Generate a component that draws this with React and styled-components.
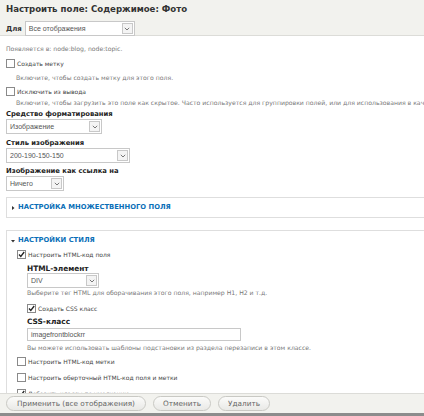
import styled, { createGlobalStyle } from 'styled-components';

const GlobalStyle = createGlobalStyle`
  html, body {
    margin: 0;
    padding: 0;
    background: #fff;
  }
  body {
    font-family: 'DejaVu Sans', Verdana, sans-serif;
    color: #333;
  }
`;

const Page = styled.div`
  width: 424px;
  height: 416px;
  display: flex;
  flex-direction: column;
  overflow: hidden;
`;

const Header = styled.header`
  background: #f2f2ee;
  border-bottom: 1px solid #dcdcd8;
  height: 36px;
  box-sizing: border-box;
  padding: 4px 6px 0;
`;

const Title = styled.h1`
  margin: 0;
  font-size: 8.6px;
  font-weight: bold;
  line-height: 11px;
  color: #333;
`;

const ForRow = styled.div`
  display: flex;
  align-items: center;
  gap: 3px;
  margin-top: 6px;
  font-size: 7px;
  font-weight: bold;
`;

const Body = styled.main`
  flex: 1;
  overflow: hidden;
  padding: 6px 0 0 6px;
`;

const Note = styled.div`
  font-size: 6.15px;
  color: #777;
  line-height: 8px;
  white-space: nowrap;
  margin: ${p => p.$m || '0'};
  padding-left: ${p => p.$indent || 0}px;
`;

const CheckRow = styled.label`
  display: flex;
  align-items: center;
  gap: 2px;
  height: 10px;
  font-size: 6px;
  color: #444;
  white-space: nowrap;
  margin: ${p => p.$m || '0'};
  padding-left: ${p => p.$indent || 0}px;
`;

const Box = styled.span`
  width: 7px;
  height: 7px;
  border: 1px solid #8a8a8a;
  background: #fff;
  display: inline-flex;
  align-items: center;
  justify-content: center;
  flex-shrink: 0;
`;

const FieldLabel = styled.div`
  font-size: ${p => (p.$big ? '7.4px' : '6.8px')};
  font-weight: bold;
  color: #222;
  line-height: 9px;
  margin: ${p => p.$m || '0'};
  padding-left: ${p => p.$indent || 0}px;
`;

const SelectBox = styled.div`
  width: ${p => p.$w}px;
  height: 15px;
  box-sizing: border-box;
  border: 1px solid #c8c8c8;
  background: #fff;
  display: flex;
  align-items: center;
  justify-content: space-between;
  padding-left: 3px;
  font-family: 'Liberation Sans', Arial, sans-serif;
  font-size: 7px;
  font-weight: normal;
  color: #555;
  margin: ${p => p.$m || '0'};
`;

const Arrow = styled.span`
  width: 11px;
  height: 11px;
  margin-right: 1px;
  box-sizing: border-box;
  border: 1px solid #c8c8c8;
  background: #f4f4f4;
  display: flex;
  align-items: center;
  justify-content: center;
`;

const TextInput = styled.div`
  width: 214px;
  height: 13px;
  box-sizing: border-box;
  border: 1px solid #c8c8c8;
  background: #fff;
  display: flex;
  align-items: center;
  padding-left: 3px;
  font-family: 'Liberation Sans', Arial, sans-serif;
  font-size: 7px;
  color: #555;
  margin: ${p => p.$m || '0'};
`;

const Fieldset = styled.section`
  border: 1px solid #dedede;
  border-right: none;
  margin: ${p => p.$m || '0'};
  padding: ${p => p.$pad || '0'};
`;

const Legend = styled.div`
  display: flex;
  align-items: center;
  gap: 3px;
  color: #0a6fb8;
  font-size: 6.8px;
  font-weight: bold;
  line-height: 9px;
  white-space: nowrap;
`;

const Indent = styled.div`
  padding-left: ${p => p.$indent}px;
`;

const Footer = styled.footer`
  background: #f2f2ee;
  border-top: 1px solid #dcdcd8;
  border-bottom: 3px solid #8c8c8c;
  height: 23px;
  box-sizing: border-box;
  display: flex;
  align-items: center;
  gap: 7px;
  padding: 0 6px;
`;

const Button = styled.button`
  height: 15px;
  width: ${p => p.$w}px;
  border: 1px solid #c9c9c4;
  border-radius: 8px;
  background: linear-gradient(#fbfbfa, #e9e9e6);
  color: #666;
  font-family: 'DejaVu Sans', Verdana, sans-serif;
  font-size: 7.3px;
  padding: 0;
`;

const Chevron = () => (
  <svg width="6" height="4" viewBox="0 0 6 4">
    <path d="M0.8 0.8 L3 3 L5.2 0.8" fill="none" stroke="#777" strokeWidth="1" />
  </svg>
);

const Check = () => (
  <svg width="7" height="7" viewBox="0 0 7 7">
    <path d="M1 3.5 L2.8 5.5 L6.2 1" fill="none" stroke="#222" strokeWidth="1.3" />
  </svg>
);

const Triangle = ({ open }) => (
  <svg width="4" height="4" viewBox="0 0 4 4">
    {open ? <path d="M0 1 L4 1 L2 3.5 Z" fill="#333" /> : <path d="M1 0 L3.5 2 L1 4 Z" fill="#333" />}
  </svg>
);

const Checkbox = ({ checked, children, ...rest }) => (
  <CheckRow {...rest}>
    <Box>{checked && <Check />}</Box>
    {children}
  </CheckRow>
);

const Select = ({ w, value, m }) => (
  <SelectBox $w={w} $m={m}>
    {value}
    <Arrow>
      <Chevron />
    </Arrow>
  </SelectBox>
);

export default function App() {
  return (
    <>
      <GlobalStyle />
      <Page>
        <Header>
          <Title>Настроить поле: Содержимое: Фото</Title>
          <ForRow>
            Для
            <Select w={110} value="Все отображения" />
          </ForRow>
        </Header>
        <Body>
          <Note $m="3px 0 0">Появляется в: node:blog, node:topic.</Note>
          <Checkbox $m="5px 0 0">Создать метку</Checkbox>
          <Note $m="6px 0 0" $indent={10}>Включите, чтобы создать метку для этого поля.</Note>
          <Checkbox $m="4px 0 0">Исключить из вывода</Checkbox>
          <Note $m="3px 0 0" $indent={10}>
            Включите, чтобы загрузить это поле как скрытое. Часто используется для группировки полей, или для использования в кач
          </Note>
          <FieldLabel $m="3px 0 0">Средство форматирования</FieldLabel>
          <Select w={96} value="Изображение" />
          <FieldLabel $m="5px 0 0">Стиль изображения</FieldLabel>
          <Select w={124} value="200-190-150-150" />
          <FieldLabel $m="4px 0 0">Изображение как ссылка на</FieldLabel>
          <Select w={58} value="Ничего" />
          <Fieldset $m="6px 0 0" $pad="5px 0 5px 4px">
            <Legend>
              <Triangle />
              НАСТРОЙКА МНОЖЕСТВЕННОГО ПОЛЯ
            </Legend>
          </Fieldset>
          <Fieldset $m="12px 0 0" $pad="5px 0 10px 4px">
            <Legend>
              <Triangle open />
              НАСТРОЙКИ СТИЛЯ
            </Legend>
            <Checkbox checked $m="4px 0 0" $indent={6}>Настроить HTML-код поля</Checkbox>
            <Indent $indent={16}>
              <FieldLabel $big $m="5px 0 0">HTML-элемент</FieldLabel>
              <Select w={72} value="DIV" />
              <Note $m="1px 0 0">Выберите тег HTML для оборачивания этого поля, например H1, H2 и т.д.</Note>
              <Checkbox checked $m="6px 0 0">Создать CSS класс</Checkbox>
              <FieldLabel $big $m="4px 0 0">CSS-класс</FieldLabel>
              <TextInput $m="2px 0 0">imagefrontblockrr</TextInput>
              <Note $m="3px 0 0">Вы можете использовать шаблоны подстановки из раздела перезаписи в этом классе.</Note>
            </Indent>
            <Checkbox $m="4px 0 0" $indent={6}>Настроить HTML-код метки</Checkbox>
            <Checkbox $m="6px 0 0" $indent={6}>Настроить оберточный HTML-код поля и метки</Checkbox>
            <Checkbox checked $m="6px 0 0" $indent={6}>Добавить классы по умолчанию</Checkbox>
          </Fieldset>
        </Body>
        <Footer>
          <Button $w={140}>Применить (все отображения)</Button>
          <Button $w={58}>Отменить</Button>
          <Button $w={52}>Удалить</Button>
        </Footer>
      </Page>
    </>
  );
}
